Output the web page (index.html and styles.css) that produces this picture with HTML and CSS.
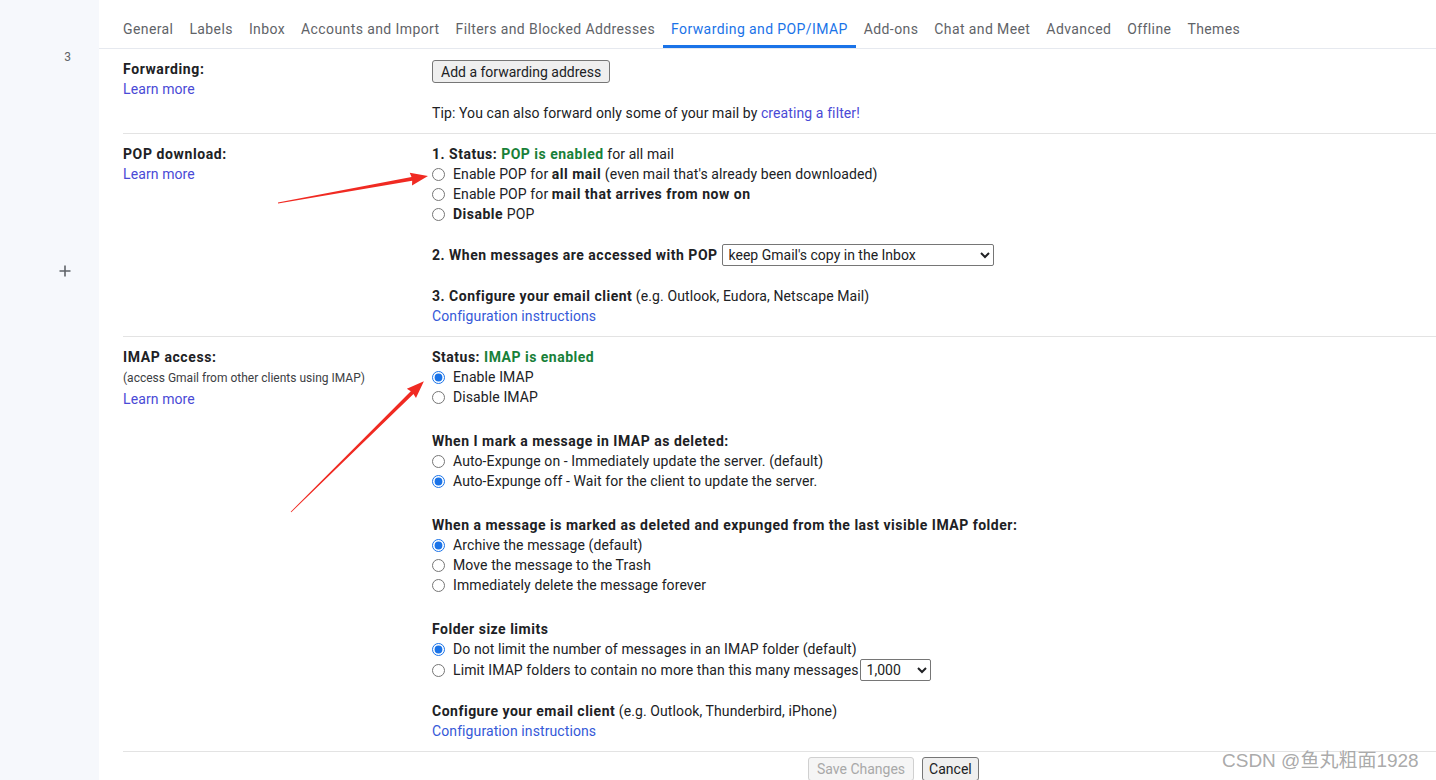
FILE: index.html
```html
<!DOCTYPE html>
<html lang="en">
<head>
<meta charset="utf-8">
<title>Settings - Forwarding and POP/IMAP</title>
<link rel="stylesheet" href="styles.css">
</head>
<body>
<div class="page">
  <aside class="sidebar">
    <span class="count">3</span>
    <svg class="plus" width="12" height="12" viewBox="0 0 12 12"><path d="M6 0.5V11.5M0.5 6H11.5" stroke="#5f6368" stroke-width="1.6" fill="none"/></svg>
  </aside>
  <main class="main">
    <nav class="tabs">
      <a class="tab">General</a>
      <a class="tab">Labels</a>
      <a class="tab">Inbox</a>
      <a class="tab">Accounts and Import</a>
      <a class="tab">Filters and Blocked Addresses</a>
      <a class="tab active">Forwarding and POP/IMAP</a>
      <a class="tab">Add-ons</a>
      <a class="tab">Chat and Meet</a>
      <a class="tab">Advanced</a>
      <a class="tab">Offline</a>
      <a class="tab">Themes</a>
    </nav>
    <div class="content">
      <section class="row">
        <div class="label">
          <div class="title">Forwarding:</div>
          <a class="learn">Learn more</a>
        </div>
        <div class="value">
          <button class="btn fwd">Add a forwarding address</button>
          <div class="line tip">Tip: You can also forward only some of your mail by <a class="learn">creating a filter!</a></div>
        </div>
      </section>
      <section class="row">
        <div class="label">
          <div class="title">POP download:</div>
          <a class="learn">Learn more</a>
        </div>
        <div class="value">
          <div class="group">
            <div class="line"><b>1. Status: </b><b class="green">POP is enabled</b> for all mail</div>
            <label class="opt"><input type="radio" name="pop"><span>Enable POP for <b>all mail</b> (even mail that's already been downloaded)</span></label>
            <label class="opt"><input type="radio" name="pop"><span>Enable POP for <b>mail that arrives from now on</b></span></label>
            <label class="opt"><input type="radio" name="pop"><span><b>Disable</b> POP</span></label>
          </div>
          <div class="group g20 selrow">
            <b>2. When messages are accessed with POP</b>
            <select class="sel wide"><option>keep Gmail's copy in the Inbox</option></select>
          </div>
          <div class="group g20">
            <div class="line"><b>3. Configure your email client</b> (e.g. Outlook, Eudora, Netscape Mail)</div>
            <a class="cfg line">Configuration instructions</a>
          </div>
        </div>
      </section>
      <section class="row">
        <div class="label">
          <div class="title">IMAP access:</div>
          <div class="sub">(access Gmail from other clients using IMAP)</div>
          <a class="learn">Learn more</a>
        </div>
        <div class="value">
          <div class="group">
            <div class="line"><b>Status: </b><b class="green">IMAP is enabled</b></div>
            <label class="opt"><input type="radio" name="imap" checked><span>Enable IMAP</span></label>
            <label class="opt"><input type="radio" name="imap"><span>Disable IMAP</span></label>
          </div>
          <div class="group g24">
            <div class="line"><b>When I mark a message in IMAP as deleted:</b></div>
            <label class="opt"><input type="radio" name="exp"><span>Auto-Expunge on - Immediately update the server. (default)</span></label>
            <label class="opt"><input type="radio" name="exp" checked><span>Auto-Expunge off - Wait for the client to update the server.</span></label>
          </div>
          <div class="group g24">
            <div class="line"><b>When a message is marked as deleted and expunged from the last visible IMAP folder:</b></div>
            <label class="opt"><input type="radio" name="del" checked><span>Archive the message (default)</span></label>
            <label class="opt"><input type="radio" name="del"><span>Move the message to the Trash</span></label>
            <label class="opt"><input type="radio" name="del"><span>Immediately delete the message forever</span></label>
          </div>
          <div class="group g24">
            <div class="line"><b>Folder size limits</b></div>
            <label class="opt"><input type="radio" name="lim" checked><span>Do not limit the number of messages in an IMAP folder (default)</span></label>
            <label class="opt selopt"><input type="radio" name="lim"><span>Limit IMAP folders to contain no more than this many messages</span><select class="sel small"><option>1,000</option></select></label>
          </div>
          <div class="group g20">
            <div class="line"><b>Configure your email client</b> (e.g. Outlook, Thunderbird, iPhone)</div>
            <a class="cfg line">Configuration instructions</a>
          </div>
        </div>
      </section>
      <div class="actions">
        <button class="btn" disabled>Save Changes</button>
        <button class="btn cancel">Cancel</button>
      </div>
    </div>
  </main>
</div>
<svg class="annot" width="1436" height="780" viewBox="0 0 1436 780">
  <g transform="translate(278,203) rotate(-10.2)">
    <polygon points="0,-0.4 136,-1.9 135,-6.5 152.4,0 135,6.5 136,1.9 0,0.4" fill="#f02a22"/>
  </g>
  <g transform="translate(291,512) rotate(-44.56)">
    <polygon points="0,-0.4 170,-1.9 169,-6.5 186.5,0 169,6.5 170,1.9 0,0.4" fill="#f02a22"/>
  </g>
</svg>
<div class="watermark">CSDN @鱼丸粗面1928</div>
</body>
</html>
```
FILE: styles.css
```css
html, body {
  margin: 0;
  padding: 0;
  width: 1436px;
  height: 780px;
  overflow: hidden;
  background: #fff;
  font-family: Roboto, "Liberation Sans", Arial, sans-serif;
  font-size: 14px;
  color: #202124;
}

.page {
  display: flex;
  height: 780px;
}

.sidebar {
  width: 99px;
  flex: none;
  background: #f6f8fc;
  display: flex;
  flex-direction: column;
  align-items: flex-end;
  padding-right: 28px;
  box-sizing: border-box;
}

.count {
  margin-top: 50px;
  font-size: 12px;
  line-height: 14px;
  color: #5f6368;
}

.plus {
  margin-top: 201px;
  display: block;
}

.main {
  flex: 1;
  min-width: 0;
  position: relative;
}

.tabs {
  display: flex;
  height: 48px;
  border-bottom: 1px solid #e6e9ef;
  padding-left: 16px;
}

.tab {
  position: relative;
  padding: 19px 8px 9px;
  line-height: 20px;
  color: #5f6368;
  font-size: 14px;
  white-space: nowrap;
  letter-spacing: 0.4px;
}

.tab.active {
  color: #1a73e8;
}

.tab.active::after {
  content: "";
  position: absolute;
  left: 0;
  right: 0;
  bottom: 0;
  height: 3px;
  background: #1a73e8;
}

.content {
  margin-left: 24px;
  letter-spacing: 0.1px;
}

.content b {
  letter-spacing: 0.5px;
}

.row {
  display: grid;
  grid-template-columns: 309px 1fr;
  padding: 10px 0;
  border-bottom: 1px solid #e3e3e3;
  line-height: 20px;
}

.label .title {
  font-weight: 700;
  line-height: 20px;
  letter-spacing: 0.6px;
}

.label .sub {
  font-size: 12px;
  color: #3c4043;
  line-height: 21px;
  margin-top: 1px;
  letter-spacing: 0;
}

.learn {
  display: block;
  color: #4a4ad6;
  text-decoration: none;
  line-height: 20px;
}

.tip .learn {
  display: inline;
}

.value {
  display: flex;
  flex-direction: column;
  align-items: flex-start;
}

.line {
  line-height: 20px;
  display: block;
}

.tip {
  margin-top: 20px;
}

.group {
  display: flex;
  flex-direction: column;
  align-items: flex-start;
}

.g20 { margin-top: 20px; }
.g24 { margin-top: 24px; }

.selrow {
  flex-direction: row;
  align-items: center;
  height: 22px;
  gap: 4px;
}

.green {
  color: #188038;
}

.opt {
  display: flex;
  align-items: center;
  height: 20px;
  line-height: 20px;
}

.opt input {
  margin: 0 8px 0 0;
  width: 13px;
  height: 13px;
  accent-color: #1a73e8;
}

.opt.selopt {
  height: 22px;
}

.sel {
  font-family: Roboto, "Liberation Sans", Arial, sans-serif;
  font-size: 14px;
  color: #202124;
  height: 22px;
  border: 1px solid #767676;
  border-radius: 2px;
  background: #fff;
  padding: 0 2px;
  letter-spacing: 0;
}

.sel.wide { width: 272px; }
.sel.small { width: 71px; margin-left: 1px; }

.cfg {
  color: #3559d8;
  text-decoration: none;
}

.btn {
  font-family: Roboto, "Liberation Sans", Arial, sans-serif;
  font-size: 14px;
  color: #202124;
  background: #efefef;
  border: 1px solid #767676;
  border-radius: 3px;
  height: 24px;
  padding: 0 8px;
  line-height: 20px;
  letter-spacing: 0;
}

.btn.cancel {
  padding: 0 6px;
}

.btn.fwd {
  margin-top: 1px;
  height: 23px;
}

.btn:disabled {
  color: #a8a8a8;
  background: #f5f5f5;
  border-color: #d0d0d0;
}

.actions {
  display: flex;
  gap: 8px;
  padding: 5px 0 0 685px;
}

.annot {
  position: absolute;
  left: 0;
  top: 0;
  pointer-events: none;
}

.watermark {
  position: absolute;
  left: 1222px;
  top: 749px;
  font-family: "Liberation Sans", "Noto Sans CJK SC", sans-serif;
  font-size: 19px;
  line-height: 24px;
  color: rgba(160, 160, 160, 0.9);
  white-space: nowrap;
}
```
